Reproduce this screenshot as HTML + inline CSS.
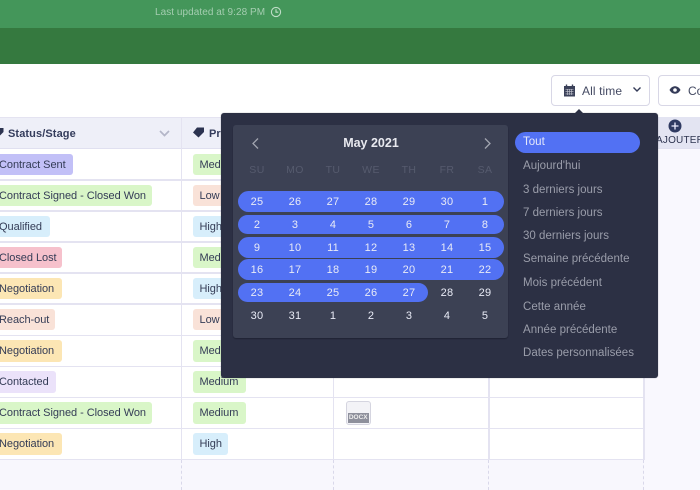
<!DOCTYPE html>
<html><head><meta charset="utf-8">
<style>
*{box-sizing:border-box}
html,body{margin:0;padding:0;background:#fff}
#p{position:relative;width:700px;height:490px;overflow:hidden;background:#fff;font-family:"Liberation Sans",sans-serif;filter:blur(.35px)}
#p div{position:absolute}
.hl{left:0;width:644px;height:1.5px;background:#e4e3f1}
.vl{width:1.5px;background:#e4e3f1}
.tag{height:21.5px;line-height:23px;font-size:11px;color:#343c56;border-radius:3px;padding-left:7px;white-space:nowrap;letter-spacing:-.05px}
.s{left:-8px}
.q{left:193px}
.pill{left:237.5px;width:266px;height:20.5px;background:#5271f3;border-radius:10.5px}
.d{width:30px;text-align:center;font-size:11px;color:#e9ebf6;line-height:16px;height:16px;letter-spacing:.2px}
.w{width:30px;text-align:center;font-size:10.5px;color:#565b6e;top:164px;line-height:13px;letter-spacing:.4px}
.o{left:523px;font-size:11.5px;color:#9a9daa;line-height:16px;white-space:nowrap;letter-spacing:.02px}
</style></head><body>
<div id="p">
<div style="left:0;top:0;width:700px;height:28px;background:#44965a"></div>
<div style="left:0;top:28px;width:700px;height:36px;background:#35793f"></div>
<div style="left:155px;top:5.5px;font-size:10px;line-height:14px;color:#a4cdb0;white-space:nowrap;letter-spacing:.05px">Last updated at 9:28 PM</div>
<svg style="position:absolute;left:270px;top:6px" width="12" height="12" viewBox="0 0 12 12" fill="none" stroke="#c0ddc8" stroke-width="1.1"><circle cx="6" cy="6" r="4.6"/><path d="M6 3.2V6.2H8.3"/></svg>

<div style="left:644px;top:148px;width:56px;height:342px;background:#f9f8fe"></div>
<div style="left:0;top:460px;width:644px;height:30px;background:#f8f7fd"></div>
<div style="left:0;top:117px;width:700px;height:31.5px;background:#eeeff8;border-top:1.5px solid #e4e3f1;border-bottom:1.5px solid #e0e0f0"></div>
<div style="left:644px;top:117px;width:56px;height:31px;background:#e3e4f2"></div>

<div class="hl" style="top:179px"></div><div class="hl" style="top:210px"></div><div class="hl" style="top:241px"></div><div class="hl" style="top:272px"></div><div class="hl" style="top:303px"></div><div class="hl" style="top:334.5px"></div><div class="hl" style="top:365.5px"></div><div class="hl" style="top:396.5px"></div><div class="hl" style="top:427.5px"></div><div class="hl" style="top:458.5px"></div>
<div class="vl" style="left:180.5px;top:117px;height:343px"></div>
<div class="vl" style="left:332.5px;top:148px;height:312px"></div>
<div class="vl" style="left:488px;top:148px;height:312px"></div>
<div class="vl" style="left:643px;top:148px;height:312px"></div>
<div style="left:180.5px;top:460px;height:30px;border-left:1.5px dashed #d9d8ea"></div>
<div style="left:332.5px;top:460px;height:30px;border-left:1.5px dashed #d9d8ea"></div>
<div style="left:488px;top:460px;height:30px;border-left:1.5px dashed #d9d8ea"></div>
<div style="left:643px;top:460px;height:30px;border-left:1.5px dashed #d9d8ea"></div>

<svg style="position:absolute;left:-3px;top:127px" width="8" height="10" viewBox="0 0 8 10"><path d="M0 1H6.5V5L3 8.5L0 5.5Z" fill="#2c3350"/></svg>
<div style="left:8px;top:126px;font-size:11px;font-weight:bold;line-height:16px;color:#343c5c;white-space:nowrap;letter-spacing:.1px">Status/Stage</div>
<svg style="position:absolute;left:159px;top:130px" width="11" height="7" viewBox="0 0 11 7" fill="none" stroke="#b4b6c8" stroke-width="1.7"><path d="M1 1L5.5 5.5L10 1"/></svg>
<svg style="position:absolute;left:192px;top:127px" width="13" height="11" viewBox="0 0 13 11"><path d="M5 0.5H12V5L6.5 10.5L1 5.5Z" fill="#2c3350"/></svg>
<div style="left:209px;top:126px;font-size:11px;font-weight:bold;line-height:16px;color:#343c5c">Priority</div>

<div class="tag s" style="top:153.5px;width:81px;background:#c2c0f7">Contract Sent</div>
<div class="tag s" style="top:184.5px;width:160px;background:#d9f6c8">Contract Signed - Closed Won</div>
<div class="tag s" style="top:215.5px;width:57.5px;background:#d7eefb">Qualified</div>
<div class="tag s" style="top:246.5px;width:70px;background:#f6c1cc">Closed Lost</div>
<div class="tag s" style="top:277.5px;width:70px;background:#fce6b4">Negotiation</div>
<div class="tag s" style="top:308.5px;width:62.5px;background:#f9e2d8">Reach-out</div>
<div class="tag s" style="top:340px;width:70px;background:#fce6b4">Negotiation</div>
<div class="tag s" style="top:371px;width:64px;background:#ebe2fa">Contacted</div>
<div class="tag s" style="top:402px;width:160px;background:#d9f6c8">Contract Signed - Closed Won</div>
<div class="tag s" style="top:433px;width:70px;background:#fce6b4">Negotiation</div>

<div class="tag q" style="top:153.5px;width:53px;background:#d9f6c8;padding-left:6.5px">Medium</div>
<div class="tag q" style="top:184.5px;width:34px;background:#f9e2d8;padding-left:6.5px">Low</div>
<div class="tag q" style="top:215.5px;width:35px;background:#d7eefb;padding-left:6.5px">High</div>
<div class="tag q" style="top:246.5px;width:53px;background:#d9f6c8;padding-left:6.5px">Medium</div>
<div class="tag q" style="top:277.5px;width:35px;background:#d7eefb;padding-left:6.5px">High</div>
<div class="tag q" style="top:308.5px;width:34px;background:#f9e2d8;padding-left:6.5px">Low</div>
<div class="tag q" style="top:340px;width:53px;background:#d9f6c8;padding-left:6.5px">Medium</div>
<div class="tag q" style="top:371px;width:53px;background:#d9f6c8;padding-left:6.5px">Medium</div>
<div class="tag q" style="top:402px;width:53px;background:#d9f6c8;padding-left:6.5px">Medium</div>
<div class="tag q" style="top:433px;width:35px;background:#d7eefb;padding-left:6.5px">High</div>

<div style="left:345.5px;top:401px;width:25.5px;height:24px;background:#f3f3f7;border:1px solid #d5d5e0;border-radius:3px"></div>
<div style="left:348px;top:412.5px;width:20.5px;height:10px;background:#8e909c;color:#eee;font-size:6.5px;font-weight:bold;line-height:10px;text-align:center">DOCX</div>

<div style="left:551px;top:75px;width:99px;height:31px;background:#fff;border:1.5px solid #d8d7e6;border-radius:4px"></div>
<svg style="position:absolute;left:563px;top:84px" width="13" height="13" viewBox="0 0 13 13"><path d="M1 2H12V12.5H1Z" fill="#3b4159"/><path d="M3.5 .5V3M9.5 .5V3" stroke="#3b4159" stroke-width="1.4"/><path d="M2.5 5.5H10.5M2.5 7.7H10.5M2.5 9.9H10.5M4.6 5V11M6.5 5V11M8.4 5V11" stroke="#c9cad4" stroke-width=".6"/></svg>
<div style="left:582px;top:83px;font-size:12px;line-height:16px;color:#454b63;white-space:nowrap;letter-spacing:.1px">All time</div>
<svg style="position:absolute;left:632px;top:86px" width="10" height="7" viewBox="0 0 10 7" fill="none" stroke="#343b58" stroke-width="1.4"><path d="M1.5 1.5L5 5L8.5 1.5"/></svg>
<div style="left:658px;top:75px;width:60px;height:31px;background:#fff;border:1.5px solid #d8d7e6;border-radius:4px"></div>
<svg style="position:absolute;left:669px;top:85px" width="12" height="10" viewBox="0 0 12 10"><path d="M.5 5C2 2.4 4 1.3 6 1.3S10 2.4 11.5 5C10 7.6 8 8.7 6 8.7S2 7.6 .5 5Z" fill="#343b58"/><circle cx="6" cy="5" r="1.8" fill="#fff"/></svg>
<div style="left:688px;top:83px;font-size:12px;line-height:16px;color:#454b63">Co</div>

<svg style="position:absolute;left:667.5px;top:119px" width="14" height="14" viewBox="0 0 14 14"><circle cx="7" cy="7" r="6.5" fill="#2f3a62"/><path d="M7 3.5V10.5M3.5 7H10.5" stroke="#eef" stroke-width="1.3"/></svg>
<div style="left:656px;top:134px;font-size:10px;line-height:13px;color:#2e3450;white-space:nowrap;letter-spacing:.2px">AJOUTER</div>

<div style="left:221px;top:113px;width:437px;height:265px;background:#2c3044;border-radius:3px;box-shadow:0 0 1px rgba(40,40,60,.5)"></div>
<div style="left:574px;top:108.5px;width:0;height:0;border-left:5px solid transparent;border-right:5px solid transparent;border-bottom:5px solid #2c3044"></div>
<div style="left:233px;top:125px;width:275px;height:213px;background:#3c4154;border-radius:3px;box-shadow:0 1px 1px rgba(20,22,35,.5)"></div>

<svg style="position:absolute;left:251px;top:136.5px" width="9" height="13" viewBox="0 0 9 13" fill="none" stroke="#a2a5b0" stroke-width="1.3"><path d="M7 1.5L2 6.5L7 11.5"/></svg>
<svg style="position:absolute;left:483px;top:136.5px" width="9" height="13" viewBox="0 0 9 13" fill="none" stroke="#a2a5b0" stroke-width="1.3"><path d="M2 1.5L7 6.5L2 11.5"/></svg>
<div style="left:321px;top:135px;width:100px;text-align:center;font-size:12.5px;font-weight:bold;line-height:16px;color:#e8e9ef">May 2021</div>

<div class="w" style="left:242px">SU</div><div class="w" style="left:280px">MO</div><div class="w" style="left:318px">TU</div><div class="w" style="left:356px">WE</div><div class="w" style="left:394px">TH</div><div class="w" style="left:432px">FR</div><div class="w" style="left:470px">SA</div>

<div class="pill" style="top:191px"></div>
<div class="pill" style="top:214.5px;height:19.5px"></div>
<div class="pill" style="top:237px"></div>
<div class="pill" style="top:259px"></div>
<div class="pill" style="top:282.5px;height:19.5px;width:190.5px"></div>

<div class="d" style="left:242px;top:193.5px">25</div><div class="d" style="left:280px;top:193.5px">26</div><div class="d" style="left:318px;top:193.5px">27</div><div class="d" style="left:356px;top:193.5px">28</div><div class="d" style="left:394px;top:193.5px">29</div><div class="d" style="left:432px;top:193.5px">30</div><div class="d" style="left:470px;top:193.5px">1</div>
<div class="d" style="left:242px;top:216.5px">2</div><div class="d" style="left:280px;top:216.5px">3</div><div class="d" style="left:318px;top:216.5px">4</div><div class="d" style="left:356px;top:216.5px">5</div><div class="d" style="left:394px;top:216.5px">6</div><div class="d" style="left:432px;top:216.5px">7</div><div class="d" style="left:470px;top:216.5px">8</div>
<div class="d" style="left:242px;top:239.5px">9</div><div class="d" style="left:280px;top:239.5px">10</div><div class="d" style="left:318px;top:239.5px">11</div><div class="d" style="left:356px;top:239.5px">12</div><div class="d" style="left:394px;top:239.5px">13</div><div class="d" style="left:432px;top:239.5px">14</div><div class="d" style="left:470px;top:239.5px">15</div>
<div class="d" style="left:242px;top:261.5px">16</div><div class="d" style="left:280px;top:261.5px">17</div><div class="d" style="left:318px;top:261.5px">18</div><div class="d" style="left:356px;top:261.5px">19</div><div class="d" style="left:394px;top:261.5px">20</div><div class="d" style="left:432px;top:261.5px">21</div><div class="d" style="left:470px;top:261.5px">22</div>
<div class="d" style="left:242px;top:284.5px">23</div><div class="d" style="left:280px;top:284.5px">24</div><div class="d" style="left:318px;top:284.5px">25</div><div class="d" style="left:356px;top:284.5px">26</div><div class="d" style="left:394px;top:284.5px">27</div><div class="d" style="left:432px;top:284.5px">28</div><div class="d" style="left:470px;top:284.5px">29</div>
<div class="d" style="left:242px;top:307.5px">30</div><div class="d" style="left:280px;top:307.5px">31</div><div class="d" style="left:318px;top:307.5px">1</div><div class="d" style="left:356px;top:307.5px">2</div><div class="d" style="left:394px;top:307.5px">3</div><div class="d" style="left:432px;top:307.5px">4</div><div class="d" style="left:470px;top:307.5px">5</div>

<div style="left:515px;top:132px;width:125px;height:20.5px;background:#5271f3;border-radius:10.5px"></div>
<div class="o" style="top:134px;color:#e6e9fb">Tout</div>
<div class="o" style="top:158px">Aujourd'hui</div>
<div class="o" style="top:181.5px">3 derniers jours</div>
<div class="o" style="top:204.5px">7 derniers jours</div>
<div class="o" style="top:228px">30 derniers jours</div>
<div class="o" style="top:251px">Semaine précédente</div>
<div class="o" style="top:274.5px">Mois précédent</div>
<div class="o" style="top:299px">Cette année</div>
<div class="o" style="top:322px">Année précédente</div>
<div class="o" style="top:345px">Dates personnalisées</div>
</div>
</body></html>
